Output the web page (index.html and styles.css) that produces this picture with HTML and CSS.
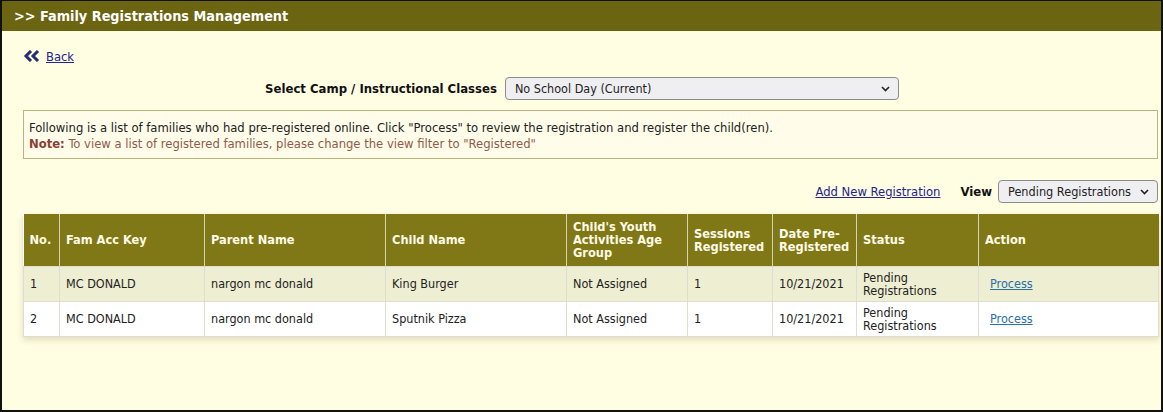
FILE: index.html
```html
<!DOCTYPE html>
<html>
<head>
<meta charset="utf-8">
<link rel="stylesheet" href="styles.css">
</head>
<body>
<div class="frame">
  <div class="titlebar">&gt;&gt; Family Registrations Management</div>
  <div class="content">
    <div class="back-row">
      <svg class="back-icon" width="17" height="12" viewBox="0 0 17 12">
        <polyline points="8,1 3,6 8,11" fill="none" stroke="#23306e" stroke-width="3"/>
        <polyline points="15,1 10,6 15,11" fill="none" stroke="#23306e" stroke-width="3"/>
      </svg>
      <a class="link back-link" href="#">Back</a>
    </div>
    <div class="camp-row">
      <label class="camp-label">Select Camp / Instructional Classes</label>
      <span class="select-wrap camp-select">
        <select class="select"><option>No School Day (Current)</option></select>
        <svg class="chev" width="9" height="6" viewBox="0 0 9 6"><polyline points="1,1 4.5,4.5 8,1" fill="none" stroke="#222" stroke-width="1.6"/></svg>
      </span>
    </div>
    <div class="info">
      <div>Following is a list of families who had pre-registered online. Click "Process" to review the registration and register the child(ren).</div>
      <div class="note"><b>Note:</b> To view a list of registered families, please change the view filter to "Registered"</div>
    </div>
    <div class="toolbar">
      <a class="link add-link" href="#">Add New Registration</a>
      <span class="view-label">View</span>
      <span class="select-wrap view-select">
        <select class="select"><option>Pending Registrations</option></select>
        <svg class="chev" width="9" height="6" viewBox="0 0 9 6"><polyline points="1,1 4.5,4.5 8,1" fill="none" stroke="#222" stroke-width="1.6"/></svg>
      </span>
    </div>
    <table class="grid">
      <colgroup>
        <col style="width:36px"><col style="width:145px"><col style="width:181px"><col style="width:181px"><col style="width:121px"><col style="width:85px"><col style="width:84px"><col style="width:122px"><col style="width:180px">
      </colgroup>
      <thead>
        <tr>
          <th>No.</th><th>Fam Acc Key</th><th>Parent Name</th><th>Child Name</th><th>Child's Youth Activities Age Group</th><th>Sessions Registered</th><th>Date Pre-Registered</th><th>Status</th><th>Action</th>
        </tr>
      </thead>
      <tbody>
        <tr class="alt">
          <td>1</td><td>MC DONALD</td><td>nargon mc donald</td><td>King Burger</td><td>Not Assigned</td><td>1</td><td>10/21/2021</td><td class="status">Pending Registrations</td><td class="action"><a class="process" href="#">Process</a></td>
        </tr>
        <tr>
          <td>2</td><td>MC DONALD</td><td>nargon mc donald</td><td>Sputnik Pizza</td><td>Not Assigned</td><td>1</td><td>10/21/2021</td><td class="status">Pending Registrations</td><td class="action"><a class="process" href="#">Process</a></td>
        </tr>
      </tbody>
    </table>
  </div>
</div>
</body>
</html>
```

FILE: styles.css
```css
* { box-sizing: border-box; }
html, body { margin: 0; padding: 0; }
body {
  font-family: "DejaVu Sans Condensed", "DejaVu Sans", Tahoma, sans-serif;
  font-size: 12.5px;
  color: #222;
}
.frame {
  width: 1163px;
  height: 412px;
  border-top: 1px solid #111;
  border-left: 2px solid #111;
  border-right: 2px solid #111;
  border-bottom: 2px solid #111;
  background: #fffde2;
  overflow: hidden;
}
.titlebar {
  height: 30px;
  line-height: 30px;
  background: #6b6411;
  color: #fff;
  font-weight: bold;
  font-size: 14.3px;
  padding-left: 12px;
}
.content {
  padding: 16px 3px 0 21px;
}
.back-row {
  display: flex;
  align-items: center;
  gap: 6px;
  height: 18px;
}
.back-icon { display: block; }
.link { color: #23238c; text-decoration: underline; }
.back-link { font-size: 12.8px; }
.camp-row {
  display: flex;
  justify-content: center;
  align-items: center;
  gap: 8px;
  margin-top: 12px;
  padding-right: 17px;
}
.camp-label { font-weight: bold; font-size: 13px; color: #111; }
.select-wrap { position: relative; display: inline-block; }
.select {
  -webkit-appearance: none;
  appearance: none;
  display: block;
  height: 23px;
  border: 1px solid #8c8c8c;
  border-radius: 4px;
  background: #efeff2;
  font-family: inherit;
  font-size: 12.5px;
  color: #222;
  padding: 0 22px 0 9px;
}
.camp-select .select { width: 394px; }
.view-select .select { width: 160px; font-size: 12.6px; }
.chev { position: absolute; right: 9px; top: 9px; }
.info {
  margin-top: 10px;
  border: 1px solid #b9b47e;
  background: #fffde9;
  padding: 9px 5px 6px 5px;
  line-height: 16px;
  font-size: 12.9px;
  color: #222;
}
.note { color: #8f5a4c; }
.note b { color: #8a3f33; }
.toolbar {
  display: flex;
  justify-content: flex-end;
  align-items: center;
  margin-top: 21px;
  height: 23px;
}
.add-link { font-size: 12.9px; margin-right: 20px; }
.view-label { font-weight: bold; font-size: 13px; color: #111; margin-right: 6px; }
.grid {
  margin-top: 11px;
  width: 1135px;
  table-layout: fixed;
  border-collapse: collapse;
  background: #fff;
  box-shadow: 0 3px 6px rgba(90, 80, 20, 0.18);
}
.grid th {
  background: #807816;
  color: #fffbe6;
  font-weight: bold;
  font-size: 12.7px;
  text-align: left;
  vertical-align: middle;
  line-height: 13px;
  height: 52px;
  padding: 0 6px;
  border-right: 1px solid #d8d4b0;
}
.grid th:last-child { border-right: none; }
.grid td {
  height: 35px;
  padding: 0 6px;
  line-height: 13px;
  vertical-align: middle;
  border: 1px solid #deddd2;
  font-size: 12.5px;
  color: #222;
}
.grid tr.alt td { background: #eeeed2; }
.grid td.action { padding-left: 11px; }
.process { color: #2a6fa6; text-decoration: underline; }
```
